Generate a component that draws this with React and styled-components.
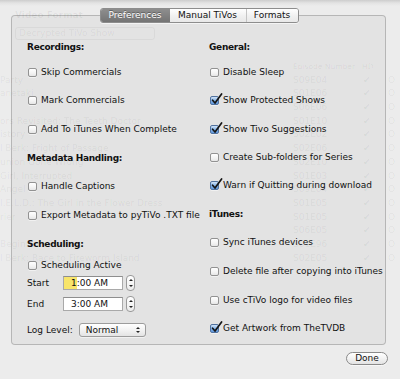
import React from 'react';
import styled, { createGlobalStyle } from 'styled-components';

const Global = createGlobalStyle`
  html, body { margin: 0; padding: 0; }
  body {
    width: 400px; height: 379px; overflow: hidden; background: #ececec;
    font-family: "DejaVu Sans", "Lucida Grande", sans-serif; color: #111;
  }
`;

const Stage = styled.div`
  display: grid;
  width: 400px;
  height: 379px;
  overflow: hidden;
  background: linear-gradient(#cdcdcd 0, #e3e3e3 3px, #ececec 6px);
  & > * { grid-area: 1 / 1; }
`;

/* ---------- ghosted main window behind the sheet ---------- */
const Ghost = styled.div`
  display: flex;
  flex-direction: column;
  padding-top: 8px;
  color: rgba(0, 0, 0, 0.06);
  font-size: 9px;
  line-height: 14px;
`;
const GhostLabel = styled.div`
  margin-left: 15px;
  height: 14px;
  font-weight: bold;
`;
const GhostPopup = styled.div`
  margin: 5px 0 0 15px;
  width: 140px;
  height: 13px;
  box-sizing: border-box;
  border: 1px solid rgba(0, 0, 0, 0.045);
  border-radius: 3px;
  padding-left: 3px;
  line-height: 11px;
`;
const GhostTable = styled.div`
  margin-top: 20px;
  display: grid;
  grid-template-columns: 290px 66px 28px 16px;
  grid-auto-rows: 13.7px;
  line-height: 13.7px;
  white-space: nowrap;
`;
const GhostCell = styled.div`
  overflow: hidden;
  padding-left: ${p => p.$pl || 0}px;
  font-size: ${p => p.$fs || 9}px;
`;

/* ---------- sheet ---------- */
const Sheet = styled.div`
  display: flex;
  flex-direction: column;
  padding: 15px 14px 0 11px;
`;
const TabBox = styled.div`
  height: 330px;
  box-sizing: border-box;
  border: 1px solid rgba(0, 0, 0, 0.2);
  border-radius: 4px;
  background: rgba(0, 0, 0, 0.035);
  display: flex;
  flex-direction: column;
`;
const TabStrip = styled.div`
  align-self: center;
  margin: -8px 0 0 1px;
  display: flex;
  height: 15px;
  box-sizing: border-box;
  border: 1px solid #8d8d8d;
  border-radius: 3px;
  overflow: hidden;
  box-shadow: 0 1px 0 rgba(255, 255, 255, 0.6);
`;
const Tab = styled.div`
  width: ${p => p.$w}px;
  box-sizing: border-box;
  text-align: center;
  font-size: 9px;
  line-height: 13px;
  color: ${p => (p.$active ? '#fff' : '#111')};
  text-shadow: ${p => (p.$active ? '0 -1px 0 rgba(0,0,0,0.35)' : 'none')};
  background: ${p =>
    p.$active
      ? 'linear-gradient(#8e8e8e, #747474)'
      : 'linear-gradient(#ffffff, #f1f1f1 50%, #e8e8e8)'};
  border-left: ${p => (p.$sep ? '1px solid #c4c4c4' : 'none')};
`;

const Columns = styled.div`
  display: grid;
  grid-template-columns: 182px 1fr;
  padding: 17px 0 0 15px;
`;
const Column = styled.div`
  display: flex;
  flex-direction: column;
`;
const Row = styled.div`
  display: flex;
  align-items: center;
  height: ${p => p.$h || 14}px;
  margin-top: ${p => p.$mt || 0}px;
  font-size: 9px;
  white-space: nowrap;
`;
const Heading = styled(Row)`
  font-weight: bold;
  letter-spacing: -0.3px;
`;
const Box = styled.span`
  position: relative;
  display: inline-block;
  width: 9px;
  height: 9px;
  box-sizing: border-box;
  margin: 0 4px 0 1px;
  border-radius: 2px;
  border: 1px solid ${p => (p.$on ? '#51729f' : '#929292')};
  background: ${p =>
    p.$on
      ? 'linear-gradient(#d2e4f8, #86b4e8 50%, #5f98de)'
      : 'linear-gradient(#ffffff, #f3f3f3 60%, #e6e6e6)'};
  box-shadow: 0 1px 0 rgba(255, 255, 255, 0.5);
`;
const CheckMark = styled.svg`
  position: absolute;
  left: 0px;
  top: -4px;
  width: 12px;
  height: 12px;
  overflow: visible;
`;

const Checkbox = ({ on, label, mt }) => (
  <Row $mt={mt}>
    <Box $on={on}>
      {on && (
        <CheckMark viewBox="0 0 12 12">
          <path d="M1.6 7.2 L4 10 L10.6 1" fill="none" stroke="#151515" strokeWidth="1.7" strokeLinecap="round" strokeLinejoin="round" />
        </CheckMark>
      )}
    </Box>
    {label}
  </Row>
);

const FieldLabel = styled.span`
  width: 36px;
`;
const TimeField = styled.div`
  width: 60px;
  height: 14px;
  box-sizing: border-box;
  border: 1px solid #a9a9a9;
  border-top-color: #8e8e8e;
  background: #fff;
  display: flex;
  align-items: center;
  padding-left: ${p => p.$pl}px;
  font-size: 9px;
`;
const Hi = styled.span`
  background: #f8e56a;
  padding-left: 7px;
  height: 100%;
  display: flex;
  align-items: center;
`;
const Stepper = styled.div`
  margin-left: 3px;
  width: 9px;
  height: 16px;
  box-sizing: border-box;
  border: 1px solid #9a9a9a;
  border-radius: 4px;
  background: linear-gradient(#ffffff, #ececec);
  display: flex;
  flex-direction: column;
  align-items: center;
  justify-content: space-around;
  padding: 1px 0;
`;
const Arrow = styled.span`
  width: 0;
  height: 0;
  border-left: 2px solid transparent;
  border-right: 2px solid transparent;
  ${p => (p.$up ? 'border-bottom: 2.5px solid #222;' : 'border-top: 2.5px solid #222;')}
`;
const Popup = styled.div`
  margin-left: 6px;
  width: 67px;
  height: 14px;
  box-sizing: border-box;
  border: 1px solid #9c9c9c;
  border-radius: 3px;
  background: linear-gradient(#ffffff, #f0f0f0 60%, #e4e4e4);
  display: flex;
  align-items: center;
  justify-content: space-between;
  padding: 0 5px 0 6px;
  box-shadow: 0 1px 0 rgba(255, 255, 255, 0.5);
`;
const Arrows = styled.span`
  display: flex;
  flex-direction: column;
  gap: 1.5px;
`;

const Footer = styled.div`
  display: flex;
  justify-content: flex-end;
  margin: 7px -2px 0 0;
`;
const Button = styled.div`
  width: 42px;
  height: 13px;
  box-sizing: border-box;
  border: 1px solid #8a8a8a;
  border-radius: 7px;
  background: linear-gradient(#ffffff, #f2f2f2 50%, #e3e3e3);
  font-size: 9px;
  line-height: 11px;
  text-align: center;
  box-shadow: 0 1px 0 rgba(255, 255, 255, 0.6);
`;

const ghostRows = [
  ['Party', 'S09E04'],
  ['anetaki', 'S01E06'],
  ['', 'S06E06'],
  ['ors Revisited: The Teeth Doctor', 'S01E10'],
  ['istory', 'S02E02'],
  ['l Berk: Fright of Passage', 'S02E06'],
  ['union Gone Wrong', 'S02E10'],
  ['Girl, Interrupted', 'S01E03'],
  ['Angel', 'S09E04'],
  ['I.E.L.D.: The Girl in the Flower Dress', 'S01E05'],
  ['rier', 'S01E05'],
  ['', 'S06E05'],
  ['Beginners 2', 'S01E96'],
  ['l Berk: Race to Fireworm Island', 'S02E05'],
];

export default function App() {
  return (
    <Stage>
      <Global />
      <Ghost>
        <GhostLabel>Video Format</GhostLabel>
        <GhostPopup>Decrypted TiVo Show</GhostPopup>
        <GhostTable>
          <GhostCell />
          <GhostCell $pl={3} $fs={7.5}>Episode Number</GhostCell>
          <GhostCell $pl={6} $fs={7.5}>HD</GhostCell>
          <GhostCell />
          {ghostRows.map(([t, e], i) => (
            <React.Fragment key={i}>
              <GhostCell>{t}</GhostCell>
              <GhostCell $pl={3}>{e}</GhostCell>
              <GhostCell $pl={7}>✔</GhostCell>
              <GhostCell $pl={4}>O</GhostCell>
            </React.Fragment>
          ))}
        </GhostTable>
      </Ghost>

      <Sheet>
        <TabBox>
          <TabStrip>
            <Tab $w={69} $active>Preferences</Tab>
            <Tab $w={76}>Manual TiVos</Tab>
            <Tab $w={52} $sep>Formats</Tab>
          </TabStrip>
          <Columns>
            <Column>
              <Heading>Recordings:</Heading>
              <Checkbox mt={11} label="Skip Commercials" />
              <Checkbox mt={14} label="Mark Commercials" />
              <Checkbox mt={15} label="Add To iTunes When Complete" />
              <Heading $mt={15}>Metadata Handling:</Heading>
              <Checkbox mt={14} label="Handle Captions" />
              <Checkbox mt={15} label="Export Metadata to pyTiVo .TXT file" />
              <Heading $mt={15}>Scheduling:</Heading>
              <Checkbox mt={7} label="Scheduling Active" />
              <Row $h={16} $mt={3}>
                <FieldLabel>Start</FieldLabel>
                <TimeField $pl={0}><Hi>1</Hi>:00 AM</TimeField>
                <Stepper><Arrow $up /><Arrow /></Stepper>
              </Row>
              <Row $h={16} $mt={5}>
                <FieldLabel>End</FieldLabel>
                <TimeField $pl={7}>3:00 AM</TimeField>
                <Stepper><Arrow $up /><Arrow /></Stepper>
              </Row>
              <Row $mt={11}>
                Log Level:
                <Popup>
                  Normal
                  <Arrows><Arrow $up /><Arrow /></Arrows>
                </Popup>
              </Row>
            </Column>
            <Column>
              <Heading>General:</Heading>
              <Checkbox mt={11} label="Disable Sleep" />
              <Checkbox mt={14} on label="Show Protected Shows" />
              <Checkbox mt={15} on label="Show Tivo Suggestions" />
              <Checkbox mt={14} label="Create Sub-folders for Series" />
              <Checkbox mt={14} on label="Warn if Quitting during download" />
              <Heading $mt={15}>iTunes:</Heading>
              <Checkbox mt={14} label="Sync iTunes devices" />
              <Checkbox mt={15} label="Delete file after copying into iTunes" />
              <Checkbox mt={15} label="Use cTiVo logo for video files" />
              <Checkbox mt={14} on label="Get Artwork from TheTVDB" />
            </Column>
          </Columns>
        </TabBox>
        <Footer>
          <Button>Done</Button>
        </Footer>
      </Sheet>
    </Stage>
  );
}
